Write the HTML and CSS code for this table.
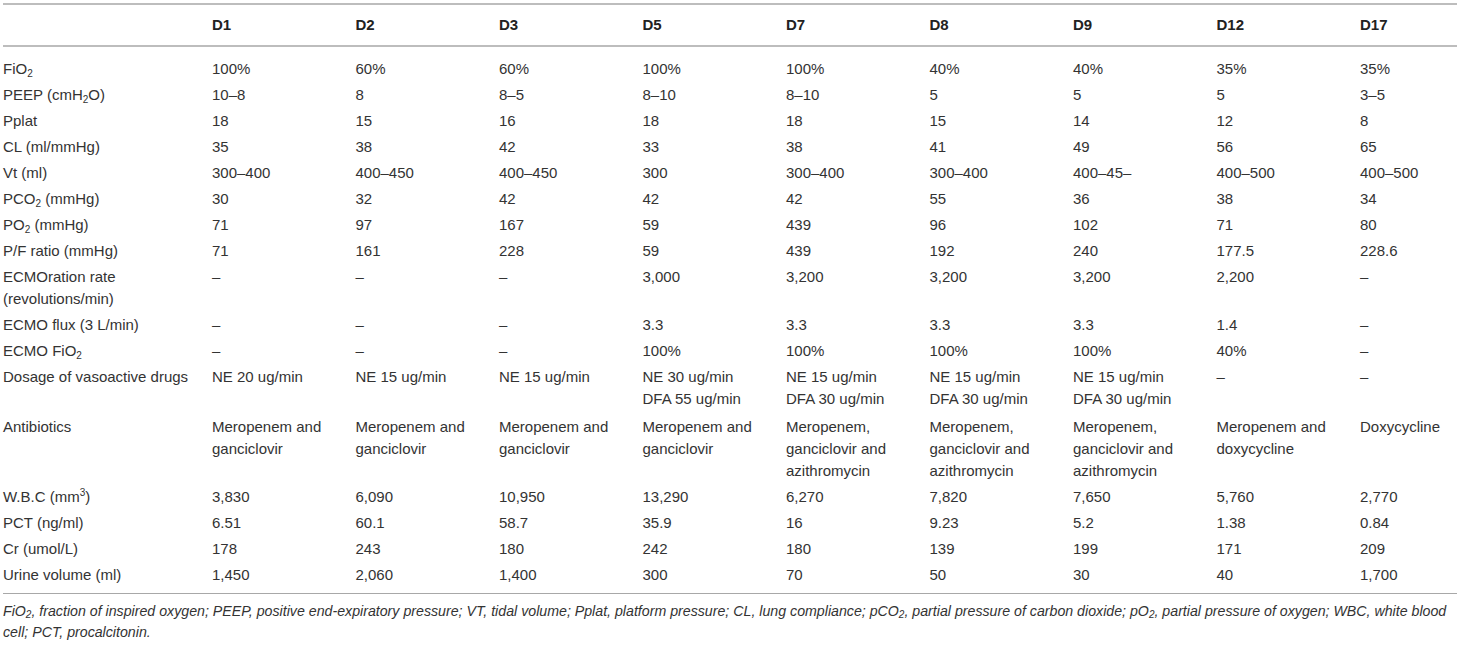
FILE: index.html
```html
<!DOCTYPE html>
<html>
<head>
<meta charset="utf-8">
<link rel="stylesheet" href="styles.css">
</head>
<body>
<div class="wrap">
<table class="data">
<colgroup>
<col class="c-label">
<col class="c-day"><col class="c-day"><col class="c-day"><col class="c-day"><col class="c-day"><col class="c-day"><col class="c-day"><col class="c-day">
<col class="c-last">
</colgroup>
<thead>
<tr><th></th><th>D1</th><th>D2</th><th>D3</th><th>D5</th><th>D7</th><th>D8</th><th>D9</th><th>D12</th><th>D17</th></tr>
</thead>
<tbody>
<tr class="first"><td>FiO<sub>2</sub></td><td>100%</td><td>60%</td><td>60%</td><td>100%</td><td>100%</td><td>40%</td><td>40%</td><td>35%</td><td>35%</td></tr>
<tr><td>PEEP (cmH<sub>2</sub>O)</td><td>10–8</td><td>8</td><td>8–5</td><td>8–10</td><td>8–10</td><td>5</td><td>5</td><td>5</td><td>3–5</td></tr>
<tr><td>Pplat</td><td>18</td><td>15</td><td>16</td><td>18</td><td>18</td><td>15</td><td>14</td><td>12</td><td>8</td></tr>
<tr><td>CL (ml/mmHg)</td><td>35</td><td>38</td><td>42</td><td>33</td><td>38</td><td>41</td><td>49</td><td>56</td><td>65</td></tr>
<tr><td>Vt (ml)</td><td>300–400</td><td>400–450</td><td>400–450</td><td>300</td><td>300–400</td><td>300–400</td><td>400–45–</td><td>400–500</td><td>400–500</td></tr>
<tr><td>PCO<sub>2</sub> (mmHg)</td><td>30</td><td>32</td><td>42</td><td>42</td><td>42</td><td>55</td><td>36</td><td>38</td><td>34</td></tr>
<tr><td>PO<sub>2</sub> (mmHg)</td><td>71</td><td>97</td><td>167</td><td>59</td><td>439</td><td>96</td><td>102</td><td>71</td><td>80</td></tr>
<tr><td>P/F ratio (mmHg)</td><td>71</td><td>161</td><td>228</td><td>59</td><td>439</td><td>192</td><td>240</td><td>177.5</td><td>228.6</td></tr>
<tr><td>ECMOration rate<br>(revolutions/min)</td><td>–</td><td>–</td><td>–</td><td>3,000</td><td>3,200</td><td>3,200</td><td>3,200</td><td>2,200</td><td>–</td></tr>
<tr><td>ECMO flux (3 L/min)</td><td>–</td><td>–</td><td>–</td><td>3.3</td><td>3.3</td><td>3.3</td><td>3.3</td><td>1.4</td><td>–</td></tr>
<tr><td>ECMO FiO<sub>2</sub></td><td>–</td><td>–</td><td>–</td><td>100%</td><td>100%</td><td>100%</td><td>100%</td><td>40%</td><td>–</td></tr>
<tr><td>Dosage of vasoactive drugs</td><td>NE 20 ug/min</td><td>NE 15 ug/min</td><td>NE 15 ug/min</td><td>NE 30 ug/min<br>DFA 55 ug/min</td><td>NE 15 ug/min<br>DFA 30 ug/min</td><td>NE 15 ug/min<br>DFA 30 ug/min</td><td>NE 15 ug/min<br>DFA 30 ug/min</td><td>–</td><td>–</td></tr>
<tr class="abx"><td>Antibiotics</td><td>Meropenem and<br>ganciclovir</td><td>Meropenem and<br>ganciclovir</td><td>Meropenem and<br>ganciclovir</td><td>Meropenem and<br>ganciclovir</td><td>Meropenem,<br>ganciclovir and<br>azithromycin</td><td>Meropenem,<br>ganciclovir and<br>azithromycin</td><td>Meropenem,<br>ganciclovir and<br>azithromycin</td><td>Meropenem and<br>doxycycline</td><td>Doxycycline</td></tr>
<tr><td>W.B.C (mm<sup>3</sup>)</td><td>3,830</td><td>6,090</td><td>10,950</td><td>13,290</td><td>6,270</td><td>7,820</td><td>7,650</td><td>5,760</td><td>2,770</td></tr>
<tr><td>PCT (ng/ml)</td><td>6.51</td><td>60.1</td><td>58.7</td><td>35.9</td><td>16</td><td>9.23</td><td>5.2</td><td>1.38</td><td>0.84</td></tr>
<tr><td>Cr (umol/L)</td><td>178</td><td>243</td><td>180</td><td>242</td><td>180</td><td>139</td><td>199</td><td>171</td><td>209</td></tr>
<tr class="last"><td>Urine volume (ml)</td><td>1,450</td><td>2,060</td><td>1,400</td><td>300</td><td>70</td><td>50</td><td>30</td><td>40</td><td>1,700</td></tr>
</tbody>
</table>
<p class="foot"><span class="fline">FiO<sub>2</sub>, fraction of inspired oxygen; PEEP, positive end-expiratory pressure; VT, tidal volume; Pplat, platform pressure; CL, lung compliance; pCO<sub>2</sub>, partial pressure of carbon dioxide; pO<sub>2</sub>, partial pressure of oxygen; WBC, white blood</span><br>cell; PCT, procalcitonin.</p>
</div>
</body>
</html>
```
FILE: styles.css
```css
html, body {
  margin: 0;
  padding: 0;
  background: #ffffff;
}
body {
  font-family: "Liberation Sans", Arial, sans-serif;
  color: #333333;
  font-size: 15px;
}
.wrap {
  padding: 3px 3px 0 3px;
}
.data {
  width: 1454px;
  border-collapse: collapse;
  table-layout: fixed;
  border-top: 2px solid #bdbdbd;
}
.c-label { width: 209px; }
.c-day { width: 143.5px; }
.c-last { width: 97px; }
.data th {
  text-align: left;
  font-weight: bold;
  color: #222222;
  height: 40px;
  padding: 0;
  vertical-align: middle;
  border-bottom: 2px solid #bdbdbd;
  line-height: 20px;
}
.data td {
  text-align: left;
  vertical-align: top;
  padding: 2px 0;
  line-height: 22px;
  white-space: nowrap;
}
.data tr.first td {
  padding-top: 11px;
}
.data tr.abx td {
  padding-top: 4px;
}
.data tr.last td {
  padding-bottom: 7px;
  border-bottom: 1px solid #a8a8a8;
}
sub, sup {
  font-size: 10px;
  line-height: 0;
  position: relative;
}
sub { vertical-align: -3px; }
sup { vertical-align: 6px; }
.foot {
  margin: 0;
  padding-top: 7px;
  font-size: 14.2px;
  font-style: italic;
  line-height: 21px;
  color: #333333;
}
.fline {
  white-space: nowrap;
}
.foot sub {
  font-size: 10px;
  vertical-align: -2px;
}
```
